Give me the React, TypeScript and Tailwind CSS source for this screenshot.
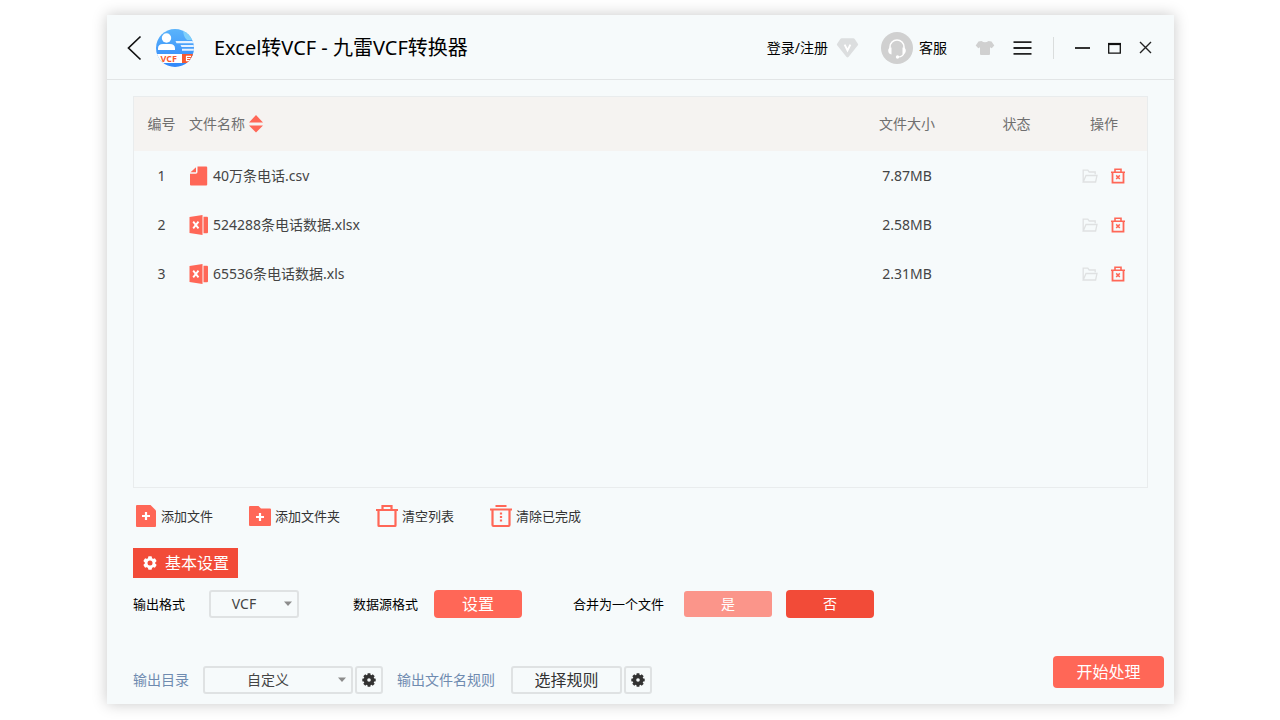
import { useState } from "react";

type FileRow = {
    name: string;
    size: string;
    kind: "file" | "excel";
};

const FILES: FileRow[] = [
    { name: "40万条电话.csv", size: "7.87MB", kind: "file" },
    { name: "524288条电话数据.xlsx", size: "2.58MB", kind: "excel" },
    { name: "65536条电话数据.xls", size: "2.31MB", kind: "excel" },
];

function Logo() {
    return (
        <svg width="38" height="38" viewBox="1 1 38 38" aria-hidden="true">
            <defs>
                <linearGradient id="logo-bg" x1="0" y1="0" x2="0" y2="1">
                    <stop offset="0" stopColor="#5cb5fb" />
                    <stop offset="1" stopColor="#2f86fa" />
                </linearGradient>
                <clipPath id="logo-clip">
                    <circle cx="20" cy="20" r="19" />
                </clipPath>
            </defs>
            <g clipPath="url(#logo-clip)">
                <rect width="40" height="40" fill="url(#logo-bg)" />
                <path d="M28 0h12v12H32q-4-3-4-12z" fill="#7fd0fb" />
                <circle cx="11.500" cy="10" r="4.700" fill="#fff" />
                <path d="M3 22v-1.500Q3 16 8 16h7q5 0 5 4.500V22z" fill="#fff" />
                <path d="M20.500 13h19.500v2.200H21.500zM25.500 17h14.500v2H26.500zM27 20.800h13v2H27z" fill="#e6f2ff" />
                <rect x="0" y="26" width="27" height="9" fill="#fff" />
                <rect x="27" y="26" width="13" height="9" fill="#f9592e" />
                <path d="M36 28.300h-4.500v4.400H36M31.500 30.500h4" stroke="#fff" strokeWidth="1.200" fill="none" />
                <text x="5.500" y="33.800" fontSize="9" fontWeight="700" fontFamily="Open Sans, sans-serif" fill="#f9592e">
                    VCF
                </text>
            </g>
        </svg>
    );
}

function FileIcon() {
    return (
        <svg width="20" height="20" viewBox="0 0 20 20" fill="#ff6757" aria-hidden="true">
            <path d="M8.500.5h8.700a1 1 0 0 1 1 1v17a1 1 0 0 1-1 1H2a1 1 0 0 1-1-1V7.700h5.800a1.700 1.700 0 0 0 1.700-1.700z" />
            <path d="M7 1.300V6.300H1.500z" />
        </svg>
    );
}

function ExcelIcon() {
    return (
        <svg width="20" height="20" viewBox="0 0 20 20" aria-hidden="true">
            <path d="M.5 2 13.500 0v20L.5 18z" fill="#ff6757" />
            <path d="M14.500 1.800H18a1 1 0 0 1 1 1v14.400a1 1 0 0 1-1 1h-3.500z" fill="#ff6757" />
            <path d="m4.200 6.700 5.300 6.600M9.500 6.700 4.200 13.300" stroke="#fff" strokeWidth="1.900" fill="none" />
        </svg>
    );
}

function FolderIcon() {
    return (
        <svg width="16" height="14" viewBox="0 0 16 14" fill="none" stroke="#dfe1e2" strokeWidth="1.300" aria-hidden="true">
            <path d="M1.200 13V1.200h4.600L7.200 3h6v2.300M1.200 13 4 6.500h11L13.600 13z" />
        </svg>
    );
}

function DeleteIcon() {
    return (
        <svg width="16" height="16" viewBox="0 0 16 16" fill="none" stroke="#ff6757" aria-hidden="true">
            <path d="M1 4.200h14M5 4V1.200h6V4" strokeWidth="1.600" />
            <path d="M2.500 4.500v10.200h11V4.500" strokeWidth="1.800" />
            <path d="m6.200 7.400 3.600 3.600M9.800 7.400 6.200 11" strokeWidth="1.500" />
        </svg>
    );
}

function AddFileIcon() {
    return (
        <svg width="22" height="24" viewBox="0 0 22 24" aria-hidden="true">
            <path d="M2 1h13.500L21 6.500V22a1 1 0 0 1-1 1H2a1 1 0 0 1-1-1V2a1 1 0 0 1 1-1z" fill="#ff6757" />
            <path d="M11 8v8M7 12h8" stroke="#fff" strokeWidth="2.200" />
        </svg>
    );
}

function AddFolderIcon() {
    return (
        <svg width="22" height="24" viewBox="0 0 22 24" aria-hidden="true">
            <path d="M1 2h8.500L12 4.500h9a1 1 0 0 1 1 1V21a1 1 0 0 1-1 1H1a1 1 0 0 1-1-1V3a1 1 0 0 1 1-1z" fill="#ff6757" />
            <path d="M11 9v8M7 13h8" stroke="#fff" strokeWidth="2.200" />
        </svg>
    );
}

function ClearIcon() {
    return (
        <svg width="22" height="24" viewBox="0 0 22 24" fill="none" stroke="#ff6757" strokeWidth="2.200" aria-hidden="true">
            <path d="M0 6h22M6.500 6V2h9v4" />
            <path d="M2.500 6v15.500q0 .5.500.5h16q.5 0 .5-.5V6" />
        </svg>
    );
}

function ClearDoneIcon() {
    return (
        <svg width="22" height="24" viewBox="0 0 22 24" fill="none" stroke="#ff6757" strokeWidth="2.200" aria-hidden="true">
            <path d="M0 5.500h22M5.500 2h11" />
            <path d="M2.500 6v15q0 1 1 1h15q1 0 1-1V6" />
            <path d="M11 8.500v9" strokeDasharray="2 1.500" />
        </svg>
    );
}

function Gear({ size, hole }: { size: number; hole: string }) {
    const teeth = [0, 45, 90, 135, 180, 225, 270, 315];
    return (
        <svg width={size} height={size} viewBox="0 0 14 14" fill="currentColor" aria-hidden="true">
            <circle cx="7" cy="7" r="5.400" />
            {teeth.map((deg) => (
                <rect key={deg} x="5.500" y="0.300" width="3" height="3" rx="0.400" transform={`rotate(${deg} 7 7)`} />
            ))}
            <circle cx="7" cy="7" r="1.800" fill={hole} />
        </svg>
    );
}

function SettingsIcon() {
    return (
        <svg width="14" height="14" viewBox="0 0 14 14" fill="currentColor" aria-hidden="true">
            <circle cx="7" cy="7" r="5.300" />
            {[0, 60, 120, 180, 240, 300].map((deg) => (
                <rect key={deg} x="5.100" y="0.300" width="3.800" height="3" rx="0.800" transform={`rotate(${deg} 7 7)`} />
            ))}
            <circle cx="7" cy="7" r="2.500" fill="#f24b38" />
        </svg>
    );
}

function Dropdown({ id, value, width }: { id: string; value: string; width: string }) {
    return (
        <div className={`relative h-7 ${width}`}>
            <select
                id={id}
                defaultValue={value}
                className="h-full w-full appearance-none rounded-[3px] border-2 border-[#dfe2e3] bg-transparent pr-5 text-center text-sm leading-none text-[#444]"
            >
                <option>{value}</option>
            </select>
            <svg className="pointer-events-none absolute top-[11px] right-1.5" width="10" height="6" viewBox="0 0 10 6" fill="#8c8c8c" aria-hidden="true">
                <path d="M1 .5h8L5 5z" />
            </svg>
        </div>
    );
}

function TitleBar() {
    return (
        <header className="flex h-[65px] shrink-0 items-center border-b border-[#e2e5e6] pt-px pr-[22px] pl-5 text-black">
            <button aria-label="返回">
                <svg width="15" height="26" viewBox="0 0 15 26" fill="none" stroke="#111" strokeWidth="1.700">
                    <path d="M13.500 1.500 1.500 13l12 11.500" />
                </svg>
            </button>
            <div className="ml-3.5">
                <Logo />
            </div>
            <h1 className="ml-5 text-xl leading-none whitespace-nowrap">Excel转VCF - 九雷VCF转换器</h1>

            <div className="ml-auto flex items-center text-sm leading-none whitespace-nowrap">
                <button className="flex items-center gap-2">
                    登录/注册
                    <svg width="23" height="22" viewBox="0 0 24 22" aria-hidden="true">
                        <path d="M6 .8h12a2 2 0 0 1 1.500.7l3.300 5a1.500 1.500 0 0 1-.2 2L13 20.500a1.500 1.500 0 0 1-2 0L1.400 8.500a1.500 1.500 0 0 1-.2-2l3.300-5A2 2 0 0 1 6 .8z" fill="#dcdedf" />
                        <path d="m9 7.500 3 6 3-6" stroke="#fff" strokeWidth="2" fill="none" />
                    </svg>
                </button>
                <button className="ml-[22px] flex items-center gap-1.5">
                    <svg width="32" height="32" viewBox="0 0 32 32" fill="none" aria-hidden="true">
                        <circle cx="16" cy="16" r="16" fill="#d0d0d0" />
                        <path d="M9 17v-2a7 7 0 0 1 14 0v2" stroke="#fff" strokeWidth="1.600" />
                        <path d="M7.200 18.500q0-3 3.300-3v7q-3.300-.5-3.300-4zM24.800 18.500q0-3-3.300-3v7q3.300-.5 3.300-4z" fill="#fff" />
                        <path d="M23 21q-1 3.500-5.500 4" stroke="#fff" strokeWidth="1.200" />
                        <circle cx="16.500" cy="25" r="1.700" fill="#fff" />
                    </svg>
                    客服
                </button>
                <button aria-label="皮肤" className="ml-7">
                    <svg width="20" height="16" viewBox="0 0 20 16" fill="#d0d0d0">
                        <path d="M6.500 1q3.500 2.500 7 0l3 .6 2.800 4-2.600 2.600-1.700-1V14q0 1-1 1H6q-1 0-1-1V7.200l-1.700 1L.7 5.600l2.800-4z" />
                    </svg>
                </button>
                <button aria-label="菜单" className="ml-[18px]">
                    <svg width="19" height="14" viewBox="0 0 19 14" stroke="#222" strokeWidth="1.800">
                        <path d="M.5 1.200h18M.5 7h18M.5 12.800h18" />
                    </svg>
                </button>
                <span className="ml-[21px] h-[22px] w-px bg-[#dadddd]" />
                <button aria-label="最小化" className="ml-[21px]">
                    <svg width="15" height="14" viewBox="0 0 15 14" stroke="#333" strokeWidth="2">
                        <path d="M0 7h15" />
                    </svg>
                </button>
                <button aria-label="最大化" className="ml-[18px]">
                    <svg width="13" height="12" viewBox="0 0 13 12" fill="none" stroke="#111">
                        <path d="M.7 1v10.200h11.600V1" strokeWidth="1.300" />
                        <path d="M0 2h13" strokeWidth="2.200" />
                    </svg>
                </button>
                <button aria-label="关闭" className="ml-[18px]">
                    <svg width="13" height="13" viewBox="0 0 13 13" stroke="#222" strokeWidth="1.400">
                        <path d="m1 1 11 11M12 1 1 12" />
                    </svg>
                </button>
            </div>
        </header>
    );
}

function FileTable() {
    return (
        <div className="min-h-[300px] flex-1 border border-[#e9eced]">
            <table className="w-full table-fixed text-sm leading-5 text-[#444]">
                <colgroup>
                    <col className="w-[55px]" />
                    <col />
                    <col className="w-[110px]" />
                    <col className="w-[109px]" />
                    <col className="w-[76px]" />
                </colgroup>
                <thead>
                    <tr className="h-[54px] bg-[#f5f3f1] text-[#6f6f6f]">
                        <th className="font-normal">编号</th>
                        <th className="text-left font-normal">
                            <button className="flex items-center gap-1">
                                文件名称
                                <svg width="14" height="18" viewBox="0 0 14 18" fill="#ff6757" aria-hidden="true">
                                    <path d="M7 0l7 7.500H0zM7 17.500l7-7H0z" />
                                </svg>
                            </button>
                        </th>
                        <th className="font-normal">文件大小</th>
                        <th className="font-normal">状态</th>
                        <th className="pr-2.5 font-normal">操作</th>
                    </tr>
                </thead>
                <tbody>
                    {FILES.map((file, i) => (
                        <tr key={file.name} className="h-[49px]">
                            <td className="text-center">{i + 1}</td>
                            <td>
                                <div className="flex items-center gap-1">
                                    {file.kind === "excel" ? <ExcelIcon /> : <FileIcon />}
                                    {file.name}
                                </div>
                            </td>
                            <td className="text-center">{file.size}</td>
                            <td />
                            <td className="pr-2.5">
                                <div className="flex items-center justify-center gap-3">
                                    <button aria-label="打开文件夹">
                                        <FolderIcon />
                                    </button>
                                    <button aria-label="删除">
                                        <DeleteIcon />
                                    </button>
                                </div>
                            </td>
                        </tr>
                    ))}
                </tbody>
            </table>
        </div>
    );
}

function Toolbar() {
    const actions = [
        { label: "添加文件", icon: <AddFileIcon /> },
        { label: "添加文件夹", icon: <AddFolderIcon /> },
        { label: "清空列表", icon: <ClearIcon /> },
        { label: "清除已完成", icon: <ClearDoneIcon /> },
    ];
    return (
        <div className="mt-4 ml-0.5 flex h-6 shrink-0 gap-9">
            {actions.map((action) => (
                <button key={action.label} className="flex items-center gap-1 text-[13px] leading-none text-[#333]">
                    {action.icon}
                    {action.label}
                </button>
            ))}
        </div>
    );
}

export default function App() {
    const [merge, setMerge] = useState(false);

    return (
        <div className="flex min-h-screen bg-white pt-[15px] pr-[106px] pb-4 pl-[107px] font-['Noto_Sans','Noto_Sans_CJK_SC',sans-serif]">
            <div className="flex min-w-0 flex-1 flex-col bg-[#f6fafb] shadow-[0_0_14px_rgba(0,0,0,0.22)]">
                <TitleBar />

                <main className="flex flex-1 flex-col px-[26px] pt-4 pb-2.5">
                    <FileTable />
                    <Toolbar />

                    {/* Basic settings */}
                    <h2 className="mt-5 flex h-[30px] w-[105px] shrink-0 items-center gap-2 bg-[#f24b38] pl-2.5 text-base leading-none whitespace-nowrap text-white">
                        <SettingsIcon />
                        基本设置
                    </h2>
                    <div className="mt-3 flex h-7 shrink-0 items-center text-[13px] leading-none whitespace-nowrap text-black">
                        <label htmlFor="format" className="mr-6">输出格式</label>
                        <Dropdown id="format" value="VCF" width="w-[90px]" />
                        <span className="mr-4 ml-[54px]">数据源格式</span>
                        <button className="h-7 w-[88px] rounded bg-[#ff6757] text-base leading-none text-white">设置</button>
                        <span className="mr-5 ml-[51px]">合并为一个文件</span>
                        <button
                            aria-pressed={merge}
                            onClick={() => setMerge(true)}
                            className={`h-[26px] w-[88px] rounded-[3px] text-sm leading-none text-white ${merge ? "bg-[#f24b38]" : "bg-[#fb958a]"}`}
                        >
                            是
                        </button>
                        <button
                            aria-pressed={!merge}
                            onClick={() => setMerge(false)}
                            className={`ml-3.5 h-7 w-[88px] rounded text-sm leading-none text-white ${merge ? "bg-[#fb958a]" : "bg-[#f24b38]"}`}
                        >
                            否
                        </button>
                    </div>

                    {/* Output options */}
                    <div className="-mr-4 mt-[38px] flex h-[38px] shrink-0 items-start justify-between">
                        <div className="flex items-center self-end text-sm leading-none whitespace-nowrap text-[#6f8bb0]">
                            <label htmlFor="target" className="mr-3.5">输出目录</label>
                            <Dropdown id="target" value="自定义" width="w-[150px]" />
                            <button aria-label="目录设置" className="ml-0.5 flex size-7 items-center justify-center rounded-[3px] border-2 border-[#dfe2e3] text-[#333]">
                                <Gear size={14} hole="#f6fafb" />
                            </button>
                            <span className="mr-4 ml-3.5">输出文件名规则</span>
                            <button className="h-7 w-[111px] rounded-[3px] border-2 border-[#dfe2e3] text-base leading-none text-[#333]">选择规则</button>
                            <button aria-label="规则设置" className="ml-0.5 flex size-7 items-center justify-center rounded-[3px] border-2 border-[#dfe2e3] text-[#333]">
                                <Gear size={14} hole="#f6fafb" />
                            </button>
                        </div>
                        <button className="h-8 w-[111px] rounded bg-[#ff6757] text-base leading-none text-white">开始处理</button>
                    </div>
                </main>
            </div>
        </div>
    );
}
